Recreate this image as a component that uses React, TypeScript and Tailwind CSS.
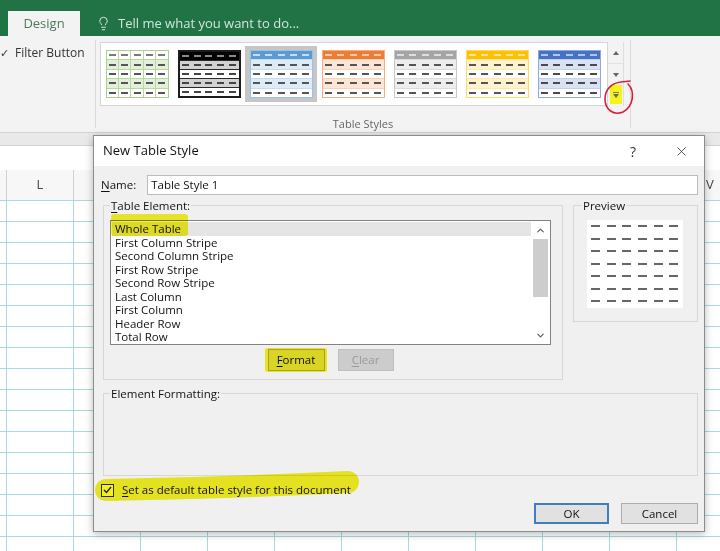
import { ChevronDown, ChevronUp, Lightbulb, X } from "lucide-react";

const ff = "font-['Open_Sans','Noto_Sans',sans-serif]";

type ThumbStyle = {
  frame: string;
  head: string;
  headDash: string;
  stripe: string;
  rowLine: string;
  vline: string;
  dash: string;
  selected?: boolean;
};

const thumbs: ThumbStyle[] = [
  { frame: "border border-[#a9d08e]", head: "bg-white", headDash: "bg-[#7a7a7a]", stripe: "bg-[#e2efda]", rowLine: "border-b border-[#b7d9a0]", vline: "border-r border-[#b7d9a0]", dash: "bg-[#555]" },
  { frame: "border-2 border-[#1c1c1c]", head: "bg-black", headDash: "bg-[#8a8a8a]", stripe: "bg-[#d2d2d2]", rowLine: "border-b border-[#2a2a2a]", vline: "", dash: "bg-[#444]" },
  { frame: "border border-[#9bc2e6]", head: "bg-[#5b9bd5]", headDash: "bg-[#c6ddf2]", stripe: "bg-[#ddebf7]", rowLine: "border-b border-[#c4dcf1]", vline: "", dash: "bg-[#555]", selected: true },
  { frame: "border border-[#f4b084]", head: "bg-[#ed7d31]", headDash: "bg-[#f8cbad]", stripe: "bg-[#fce4d6]", rowLine: "border-b border-[#f8d3bb]", vline: "", dash: "bg-[#555]" },
  { frame: "border border-[#c9c9c9]", head: "bg-[#a5a5a5]", headDash: "bg-[#dedede]", stripe: "bg-[#ededed]", rowLine: "border-b border-[#dcdcdc]", vline: "", dash: "bg-[#555]" },
  { frame: "border border-[#ffd966]", head: "bg-[#ffc000]", headDash: "bg-[#ffe699]", stripe: "bg-[#fff2cc]", rowLine: "border-b border-[#ffe9a6]", vline: "", dash: "bg-[#555]" },
  { frame: "border border-[#8ea9db]", head: "bg-[#4472c4]", headDash: "bg-[#b4c6e7]", stripe: "bg-[#d9e1f2]", rowLine: "border-b border-[#c2d0eb]", vline: "", dash: "bg-[#4a4a4a]" },
];

function TableThumb({ t }: { t: ThumbStyle }) {
  return (
    <div className={`flex h-[56px] w-[72px] items-center justify-center ${t.selected ? "bg-[#c6c6c6]" : ""}`}>
      <div className={`flex h-[48px] w-[63px] flex-col bg-white ${t.frame}`}>
        {[0, 1, 2, 3, 4].map((r) => (
          <div
            key={r}
            className={`flex flex-1 ${r === 0 ? t.head : r % 2 === 1 ? t.stripe : "bg-white"} ${r < 4 ? t.rowLine : ""}`}
          >
            {[0, 1, 2, 3, 4].map((c) => (
              <div key={c} className={`flex flex-1 items-center justify-center ${c < 4 ? t.vline : ""}`}>
                <div className={`h-[2px] w-[7px] ${r === 0 ? t.headDash : t.dash}`} />
              </div>
            ))}
          </div>
        ))}
      </div>
    </div>
  );
}

function TitleStrip() {
  return (
    <div className="flex h-[36px] items-end bg-[#217346]">
      <div className="ml-[8px] flex h-[25px] w-[72px] items-center justify-center bg-[#f3f3f3] text-[13px] text-[#4a7a5e]">
        Design
      </div>
      <div className="ml-[16px] flex h-[25px] items-center gap-[7px] text-[13px] text-[#cfe6d8]">
        <Lightbulb size={15} strokeWidth={1.6} />
        <span>Tell me what you want to do...</span>
      </div>
    </div>
  );
}

function Ribbon() {
  return (
    <div className="flex h-[97px] border-b border-[#d4d4d4] bg-[#f3f3f3]">
      <div className="flex w-[95px] items-start pt-[8px] text-[12px] text-[#333]">
        <span className="w-[15px] text-[11px] leading-[17px]">✓</span>
        <span className="leading-[17px]">Filter Button</span>
      </div>
      <div className="my-[4px] w-px bg-[#dadada]" />
      <div className="flex w-[534px] flex-col">
        <div className="ml-[4px] mt-[6px] flex">
          <div className="flex h-[64px] w-[508px] border border-[#d6d6d6] bg-white pt-[3px]">
            {thumbs.map((t, i) => (
              <TableThumb key={i} t={t} />
            ))}
          </div>
          <div className="flex w-[16px] flex-col border-r border-[#dedede]">
            <div className="flex h-[22px] items-center justify-center border-b border-[#e2e2e2]">
              <svg width="6" height="4" viewBox="0 0 6 4"><path d="M0 4 L3 0 L6 4 Z" fill="#666" /></svg>
            </div>
            <div className="flex h-[21px] items-center justify-center">
              <svg width="6" height="4" viewBox="0 0 6 4"><path d="M0 0 L3 4 L6 0 Z" fill="#666" /></svg>
            </div>
            <div className="ml-[2px] flex h-[19px] w-[12px] flex-col items-center justify-center gap-[1px] bg-[#f5f21e]">
              <div className="h-px w-[6px] bg-[#777]" />
              <svg width="6" height="4" viewBox="0 0 6 4"><path d="M0 0 L3 4 L6 0 Z" fill="#666" /></svg>
            </div>
          </div>
        </div>
        <div className="mt-auto text-center text-[11px] leading-[16px] text-[#666]">Table Styles</div>
      </div>
      <div className="my-[4px] w-px bg-[#dadada]" />
    </div>
  );
}

// Only the outer column letters show; the ones in between sit behind the dialog.
const columns = ["L", "", "", "", "", "", "", "", "", "", "V"];

function Sheet() {
  return (
    <div>
      <div className="h-[13px] border-b border-[#d4d4d4] bg-[#e9e9e9]" />
      <div className="h-[24px] bg-white" />
      <div className="grid h-[31px] grid-cols-[7px_repeat(11,67px)] border-b border-[#a6dcdd] bg-[#f7f7f7]">
        <div className="border-r border-[#d0d0d0]" />
        {columns.map((c, i) => (
          <div key={i} className="flex items-center justify-center border-r border-[#d0d0d0] text-[13px] text-[#444]">
            {c}
          </div>
        ))}
      </div>
      {Array.from({ length: 17 }).map((_, r) => (
        <div key={r} className="grid h-[21px] grid-cols-[7px_repeat(11,67px)]">
          {Array.from({ length: 12 }).map((_, c) => (
            <div key={c} className="border-b border-r border-[#a6dcdd]" />
          ))}
        </div>
      ))}
    </div>
  );
}

const elements = [
  "Whole Table",
  "First Column Stripe",
  "Second Column Stripe",
  "First Row Stripe",
  "Second Row Stripe",
  "Last Column",
  "First Column",
  "Header Row",
  "Total Row",
];

function GroupLabel({ children, left }: { children: React.ReactNode; left: string }) {
  return (
    <span className={`absolute -top-[8px] ${left} bg-[#f0f0f0] px-px text-[11.5px] leading-[15px] text-[#111]`}>
      {children}
    </span>
  );
}

function NewTableStyleDialog() {
  return (
    <div className="absolute left-[93px] top-[135px] flex h-[397px] w-[612px] flex-col border border-[#8c8c8c] bg-[#f0f0f0] text-[#111] shadow-[0_2px_8px_rgba(0,0,0,0.28)]">
      <div className="flex h-[30px] items-center bg-white pl-[9px] text-[13px]">
        <span>New Table Style</span>
        <span className="ml-auto flex w-[50px] justify-center text-[14px] text-[#333]">?</span>
        <span className="flex w-[46px] justify-center text-[#333]">
          <X size={15} strokeWidth={1.3} />
        </span>
      </div>

      <div className="flex flex-col pl-[7px] pr-[6px] text-[11.5px]">
        <div className="mt-[9px] flex h-[20px] items-center gap-[11px]">
          <label className="leading-[16px]">
            <span className="underline underline-offset-2">N</span>ame:
          </label>
          <div className="flex h-[20px] flex-1 items-center border border-[#bcbcbc] bg-white pl-[3px] leading-[16px]">
            Table Style 1
          </div>
        </div>

        <div className="ml-[2px] mt-[10px] flex gap-[10px]">
          <div className="relative h-[175px] w-[460px] border border-[#d7d7d7]">
            <GroupLabel left="left-[6px]">
              <span className="underline underline-offset-2">T</span>able Element:
            </GroupLabel>
            <div className="ml-[6px] mt-[14px] flex h-[125px] w-[441px] border border-[#828282] bg-white">
              <div className="flex-1 pl-px pt-px">
                {elements.map((e, i) => (
                  <div key={e} className={`h-[13.5px] pl-[3px] leading-[13.5px] ${i === 0 ? "bg-[#e5e5e5]" : ""}`}>
                    {e}
                  </div>
                ))}
              </div>
              <div className="flex w-[19px] flex-col">
                <div className="flex h-[18px] items-center justify-center text-[#555]">
                  <ChevronUp size={11} strokeWidth={2.4} />
                </div>
                <div className="mx-[2px] h-[58px] bg-[#cdcdcd]" />
                <div className="flex-1" />
                <div className="flex h-[18px] items-center justify-center text-[#555]">
                  <ChevronDown size={11} strokeWidth={2.4} />
                </div>
              </div>
            </div>
            <div className="ml-[6px] mt-[4px] flex w-[441px] justify-center gap-[13px]">
              <div className="flex h-[22px] w-[57px] items-center justify-center border border-[#adadad] bg-[#e1e1e1]">
                <span>
                  <span className="underline underline-offset-2">F</span>ormat
                </span>
              </div>
              <div className="flex h-[22px] w-[56px] items-center justify-center border border-[#bfbfbf] bg-[#cccccc] text-[#9a9a9a]">
                <span>
                  <span className="underline underline-offset-2">C</span>lear
                </span>
              </div>
            </div>
          </div>

          <div className="relative h-[117px] w-[125px] border border-[#d7d7d7]">
            <GroupLabel left="left-[8px]">Preview</GroupLabel>
            <div className="ml-[13px] mt-[14px] grid h-[88px] w-[96px] grid-cols-[repeat(6,15.6px)] grid-rows-[repeat(7,12.5px)] bg-white pl-px">
              {Array.from({ length: 42 }).map((_, i) => (
                <div key={i} className="flex items-center justify-center">
                  <div className="h-[2px] w-[9px] bg-[#666]" />
                </div>
              ))}
            </div>
          </div>
        </div>

        <div className="relative ml-[2px] mt-[13px] h-[83px] w-[595px] border border-[#d7d7d7]">
          <GroupLabel left="left-[6px]">Element Formatting:</GroupLabel>
        </div>

        <div className="mt-[7px] flex h-[14px] items-center">
          <div className="flex h-[13px] w-[13px] items-center justify-center border border-[#333] bg-white">
            <svg width="9" height="8" viewBox="0 0 9 8">
              <path d="M1 4 L3.5 6.5 L8 1" fill="none" stroke="#222" strokeWidth="1.4" />
            </svg>
          </div>
          <span className="ml-[8px]">
            <span className="underline underline-offset-2">S</span>et as default table style for this document
          </span>
        </div>

        <div className="mt-[6px] flex justify-end gap-[12px]">
          <div className="flex h-[21px] w-[75px] items-center justify-center border-2 border-[#3f7fbd] bg-[#e1e1e1]">OK</div>
          <div className="flex h-[21px] w-[77px] items-center justify-center border border-[#adadad] bg-[#e1e1e1]">Cancel</div>
        </div>
      </div>
    </div>
  );
}

export default function App() {
  return (
    <div className={`relative h-[551px] w-[720px] overflow-hidden bg-white ${ff}`}>
      <TitleStrip />
      <Ribbon />
      <Sheet />
      <NewTableStyleDialog />

      {/* marker highlights */}
      <div className="absolute left-[111px] top-[214px] h-[22px] w-[77px] rounded-[3px] bg-[#f6f22c] mix-blend-multiply" />
      <div className="absolute left-[265px] top-[348px] h-[24px] w-[62px] rounded-[2px] bg-[#f6f22c] mix-blend-multiply" />
      <svg className="absolute left-[94px] top-[468px] mix-blend-multiply" width="272" height="38" viewBox="0 0 272 38">
        <path d="M12 22 Q 130 20 254 14" fill="none" stroke="#f3ef22" strokeWidth="22" strokeLinecap="round" />
      </svg>

      {/* hand-drawn ring around the gallery's more button */}
      <svg className="absolute left-[600px] top-[76px]" width="38" height="42" viewBox="0 0 38 42">
        <path
          d="M28 8 C 35 15, 34 30, 23 36 C 13 40, 5 33, 5 23 C 5 13, 12 7, 21 6 C 24 5.5, 27 5.5, 30 5"
          fill="none"
          stroke="#d8203c"
          strokeWidth="1.6"
          strokeLinecap="round"
        />
      </svg>
    </div>
  );
}
